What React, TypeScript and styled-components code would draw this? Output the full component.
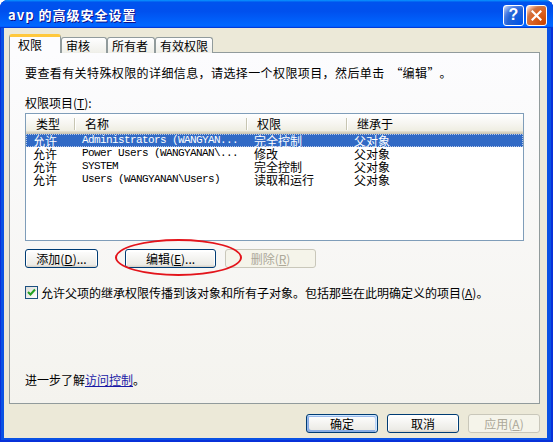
import React from "react";
import styled, { createGlobalStyle, css } from "styled-components";

const GlobalStyle = createGlobalStyle`
  html, body {
    margin: 0;
    padding: 0;
    background: #ffffff;
  }
  body {
    font-family: "Noto Sans CJK SC", "Liberation Sans", sans-serif;
    font-size: 12px;
    color: #000;
  }
`;

const UI_FONT = `"Noto Sans CJK SC", "Liberation Sans", sans-serif`;

const Window = styled.div`
  width: 553px;
  height: 442px;
  box-sizing: border-box;
  display: flex;
  flex-direction: column;
  padding: 0 6px 4px 4px;
  border-radius: 8px 8px 0 0;
  background: #0a52e4;
  box-shadow: inset -2px -2px #0831d9, inset -1px -1px #001ea0, inset 1px 0 #0831d9;
`;

const TitleBar = styled.div`
  height: 28px;
  margin: 0 -6px 0 -4px;
  padding: 0 6px 0 8px;
  display: flex;
  align-items: center;
  border-radius: 8px 8px 0 0;
  background: linear-gradient(
    180deg,
    #0997ff,
    #0053ee 8%,
    #0050ee 40%,
    #0066ff 88%,
    #0066ff 93%,
    #005bff 95%,
    #003dd7 96%,
    #003dd7
  );
`;

const Title = styled.div`
  flex: 1;
  color: #fff;
  font-family: ${UI_FONT};
  font-weight: bold;
  font-size: 13px;
  letter-spacing: 1px;
  text-shadow: 1px 1px #0f1089;
  white-space: pre;
`;

const CaptionButtons = styled.div`
  display: flex;
  gap: 2px;
  margin-top: 2px;
`;

const CaptionButton = styled.div<{ $kind: "help" | "close" }>`
  width: 21px;
  height: 21px;
  box-sizing: border-box;
  border: 1px solid #fff;
  border-radius: 3px;
  display: grid;
  place-items: center;
  color: #fff;
  font-family: "Liberation Sans", sans-serif;
  font-weight: bold;
  font-size: 16px;
  line-height: 1;
  ${(p) =>
    p.$kind === "close"
      ? css`
          background: radial-gradient(
            circle at 90% 90%,
            #cc4600 0%,
            #dc6527 55%,
            #cd7546 70%,
            #ffccb2 90%,
            #fff 100%
          );
        `
      : css`
          background: radial-gradient(
            circle at 90% 90%,
            #0054e9 0%,
            #2263d5 55%,
            #4479e4 70%,
            #a3bbec 90%,
            #fff 100%
          );
        `}
`;

const Client = styled.div`
  flex: 1;
  display: flex;
  flex-direction: column;
  padding: 6px 7px 5px 5px;
  background: #ece9d8;
`;

const TabStrip = styled.div`
  display: flex;
  align-items: flex-end;
  height: 19px;
  margin-bottom: -1px;
  position: relative;
  z-index: 1;
`;

const Tab = styled.div<{ $active?: boolean; $w: number }>`
  width: ${(p) => p.$w}px;
  box-sizing: border-box;
  height: ${(p) => (p.$active ? 19 : 16)}px;
  padding-left: ${(p) => (p.$active ? 8 : 4)}px;
  border: 1px solid #919b9c;
  border-bottom: none;
  border-radius: 3px 3px 0 0;
  font-size: 12px;
  line-height: 15px;
  white-space: nowrap;
  background: linear-gradient(180deg, #fff, #fafaf9 26%, #f0f0ea 95%, #ecebe6);
  ${(p) =>
    p.$active &&
    css`
      background: #fcfcfe;
      border-top: 3px solid #ffc83c;
      box-shadow: inset 0 -1px #fcfcfe;
    `}
`;

const Panel = styled.div`
  height: 352px;
  box-sizing: border-box;
  border: 1px solid #919b9c;
  background: linear-gradient(180deg, #fcfcfe, #f4f3ee);
  padding: 13px 15px 16px 15px;
  display: flex;
  flex-direction: column;
`;

const Line = styled.div`
  line-height: 14px;
  white-space: nowrap;
`;

const Intro = styled(Line)`
  letter-spacing: 0.4px;
`;

const Label = styled(Line)`
  margin-top: 16px;
`;

const Key = styled.span`
  text-decoration: underline;
`;

// full-width quotation marks, as the system font sets them
const Quote = styled.span<{ $open?: boolean }>`
  display: inline-block;
  width: 12px;
  margin-left: ${(p) => (p.$open ? 6 : 0)}px;
  text-align: ${(p) => (p.$open ? "right" : "left")};
`;

const ListBox = styled.div`
  margin-top: 3px;
  height: 128px;
  box-sizing: border-box;
  border: 1px solid #7f9db9;
  background: #fff;
`;

const COLUMNS = "49px 172px 100px 1fr";

const HeaderRow = styled.div`
  display: grid;
  grid-template-columns: ${COLUMNS};
  height: 20px;
  background: linear-gradient(180deg, #fff, #f6f5f0 50%, #ebeadb);
  box-shadow: inset 0 -1px #cbc7b8, inset 0 -2px #d6d2c2, inset 0 -3px #e2dece;
`;

const HeaderCell = styled.div`
  position: relative;
  padding-left: 10px;
  line-height: 19px;
  &:not(:last-child)::after {
    content: "";
    position: absolute;
    right: 0;
    top: 4px;
    bottom: 4px;
    width: 1px;
    background: #c7c5b2;
    box-shadow: 1px 0 #fff;
  }
`;

const Row = styled.div<{ $selected?: boolean }>`
  display: grid;
  grid-template-columns: ${COLUMNS};
  height: 13px;
  line-height: 13px;
  white-space: nowrap;
  ${(p) =>
    p.$selected &&
    css`
      background: #316ac5;
      color: #fff;
      outline: 1px dotted #b9c9e6;
      outline-offset: -1px;
    `}
`;

const Cell = styled.div<{ $mono?: boolean }>`
  padding-left: 7px;
  ${(p) =>
    p.$mono &&
    css`
      font-family: "Liberation Mono", monospace;
      font-size: 11px;
      letter-spacing: -0.6px;
    `}
`;

const ButtonRow = styled.div`
  position: relative;
  display: flex;
  margin-top: 8px;
`;

const Button = styled.button<{ $w: number; $gap?: number; $default?: boolean }>`
  width: ${(p) => p.$w}px;
  height: 19px;
  margin-right: ${(p) => p.$gap ?? 0}px;
  box-sizing: border-box;
  padding: 0;
  font-family: ${UI_FONT};
  font-size: 12px;
  line-height: 17px;
  color: #000;
  white-space: nowrap;
  border: 1px solid #003c74;
  border-radius: 3px;
  background: linear-gradient(180deg, #fff, #ecebe6 86%, #d6d0c5);
  box-shadow: inset -1px 1px #fff, inset 1px 2px #fff;
  ${(p) =>
    p.$default &&
    css`
      box-shadow: inset -1px 1px #cee7ff, inset 1px 2px #98b8ea, inset -2px 2px #bcd4f6,
        inset 1px -1px #89ade4, inset 2px -2px #89ade4;
    `}
  &:disabled {
    color: #aca899;
    border-color: #c9c7ba;
    background: #f5f4ea;
    box-shadow: none;
  }
`;

// red marker ring drawn over the button row
const Ring = styled.div`
  position: absolute;
  left: 90px;
  top: -10px;
  width: 127px;
  height: 37px;
  box-sizing: border-box;
  border: 2px solid #e3141b;
  border-radius: 50%;
  pointer-events: none;
`;

const CheckRow = styled.div`
  display: flex;
  align-items: center;
  gap: 3px;
  margin-top: 18px;
  height: 13px;
  white-space: nowrap;
`;

const CheckBox = styled.div`
  width: 13px;
  height: 13px;
  box-sizing: border-box;
  border: 1px solid #1c5180;
  background: linear-gradient(135deg, #dcdcd7, #fff);
  display: grid;
  place-items: center;
`;

const Footer = styled(Line)`
  margin-top: auto;
`;

const Link = styled.a`
  color: #1a1aa6;
  text-decoration: underline;
`;

const DialogButtons = styled.div`
  display: flex;
  justify-content: flex-end;
  gap: 9px;
  margin-top: 10px;
`;

const rows = [
  { type: "允许", name: "Administrators (WANGYAN...", perm: "完全控制", from: "父对象" },
  { type: "允许", name: "Power Users (WANGYANAN\\...", perm: "修改", from: "父对象" },
  { type: "允许", name: "SYSTEM", perm: "完全控制", from: "父对象" },
  { type: "允许", name: "Users (WANGYANAN\\Users)", perm: "读取和运行", from: "父对象" },
];

const tabs = [
  { label: "权限", w: 52 },
  { label: "审核", w: 46 },
  { label: "所有者", w: 48 },
  { label: "有效权限", w: 58 },
];

export default function App() {
  return (
    <>
      <GlobalStyle />
      <Window>
        <TitleBar>
          <Title>avp 的高级安全设置</Title>
          <CaptionButtons>
            <CaptionButton $kind="help">?</CaptionButton>
            <CaptionButton $kind="close">
              <svg width="11" height="11" viewBox="0 0 11 11">
                <path d="M1.5 1.5 L9.5 9.5 M9.5 1.5 L1.5 9.5" stroke="#fff" strokeWidth="2.2" strokeLinecap="square" />
              </svg>
            </CaptionButton>
          </CaptionButtons>
        </TitleBar>
        <Client>
          <TabStrip>
            {tabs.map((t, i) => (
              <Tab key={t.label} $w={t.w} $active={i === 0}>
                {t.label}
              </Tab>
            ))}
          </TabStrip>
          <Panel>
            <Intro>
              要查看有关特殊权限的详细信息，请选择一个权限项目，然后单击
              <Quote $open>“</Quote>编辑<Quote>”</Quote>。
            </Intro>
            <Label>
              权限项目(<Key>T</Key>):
            </Label>
            <ListBox>
              <HeaderRow>
                <HeaderCell>类型</HeaderCell>
                <HeaderCell>名称</HeaderCell>
                <HeaderCell>权限</HeaderCell>
                <HeaderCell>继承于</HeaderCell>
              </HeaderRow>
              {rows.map((r, i) => (
                <Row key={r.name} $selected={i === 0}>
                  <Cell>{r.type}</Cell>
                  <Cell $mono>{r.name}</Cell>
                  <Cell>{r.perm}</Cell>
                  <Cell>{r.from}</Cell>
                </Row>
              ))}
            </ListBox>
            <ButtonRow>
              <Button $w={73} $gap={27}>
                添加(<Key>D</Key>)...
              </Button>
              <Button $w={91} $gap={9}>
                编辑(<Key>E</Key>)...
              </Button>
              <Button $w={91} disabled>
                删除(<Key>R</Key>)
              </Button>
              <Ring />
            </ButtonRow>
            <CheckRow>
              <CheckBox>
                <svg width="9" height="9" viewBox="0 0 9 9">
                  <path d="M1 4 L3.5 6.5 L8 1.5" fill="none" stroke="#21a121" strokeWidth="2" />
                </svg>
              </CheckBox>
              <span>
                允许父项的继承权限传播到该对象和所有子对象。包括那些在此明确定义的项目(<Key>A</Key>)。
              </span>
            </CheckRow>
            <Footer>
              进一步了解<Link href="#">访问控制</Link>。
            </Footer>
          </Panel>
          <DialogButtons>
            <Button $w={72} $default>
              确定
            </Button>
            <Button $w={72}>取消</Button>
            <Button $w={72} disabled>
              应用(<Key>A</Key>)
            </Button>
          </DialogButtons>
        </Client>
      </Window>
    </>
  );
}
